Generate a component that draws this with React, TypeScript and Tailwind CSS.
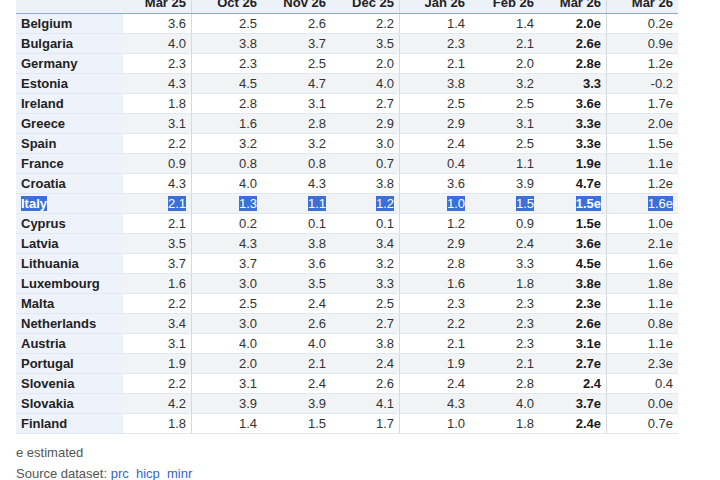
import React from "react";

const headers = ["Mar 25", "Oct 26", "Nov 26", "Dec 25", "Jan 26", "Feb 26", "Mar 26", "Mar 26"];

const rows: [string, string[]][] = [
  ["Belgium", ["3.6", "2.5", "2.6", "2.2", "1.4", "1.4", "2.0e", "0.2e"]],
  ["Bulgaria", ["4.0", "3.8", "3.7", "3.5", "2.3", "2.1", "2.6e", "0.9e"]],
  ["Germany", ["2.3", "2.3", "2.5", "2.0", "2.1", "2.0", "2.8e", "1.2e"]],
  ["Estonia", ["4.3", "4.5", "4.7", "4.0", "3.8", "3.2", "3.3", "-0.2"]],
  ["Ireland", ["1.8", "2.8", "3.1", "2.7", "2.5", "2.5", "3.6e", "1.7e"]],
  ["Greece", ["3.1", "1.6", "2.8", "2.9", "2.9", "3.1", "3.3e", "2.0e"]],
  ["Spain", ["2.2", "3.2", "3.2", "3.0", "2.4", "2.5", "3.3e", "1.5e"]],
  ["France", ["0.9", "0.8", "0.8", "0.7", "0.4", "1.1", "1.9e", "1.1e"]],
  ["Croatia", ["4.3", "4.0", "4.3", "3.8", "3.6", "3.9", "4.7e", "1.2e"]],
  ["Italy", ["2.1", "1.3", "1.1", "1.2", "1.0", "1.5", "1.5e", "1.6e"]],
  ["Cyprus", ["2.1", "0.2", "0.1", "0.1", "1.2", "0.9", "1.5e", "1.0e"]],
  ["Latvia", ["3.5", "4.3", "3.8", "3.4", "2.9", "2.4", "3.6e", "2.1e"]],
  ["Lithuania", ["3.7", "3.7", "3.6", "3.2", "2.8", "3.3", "4.5e", "1.6e"]],
  ["Luxembourg", ["1.6", "3.0", "3.5", "3.3", "1.6", "1.8", "3.8e", "1.8e"]],
  ["Malta", ["2.2", "2.5", "2.4", "2.5", "2.3", "2.3", "2.3e", "1.1e"]],
  ["Netherlands", ["3.4", "3.0", "2.6", "2.7", "2.2", "2.3", "2.6e", "0.8e"]],
  ["Austria", ["3.1", "4.0", "4.0", "3.8", "2.1", "2.3", "3.1e", "1.1e"]],
  ["Portugal", ["1.9", "2.0", "2.1", "2.4", "1.9", "2.1", "2.7e", "2.3e"]],
  ["Slovenia", ["2.2", "3.1", "2.4", "2.6", "2.4", "2.8", "2.4", "0.4"]],
  ["Slovakia", ["4.2", "3.9", "3.9", "4.1", "4.3", "4.0", "3.7e", "0.0e"]],
  ["Finland", ["1.8", "1.4", "1.5", "1.7", "1.0", "1.8", "2.4e", "0.7e"]],
];

const colW = ["w-[69px]", "w-[70px]", "w-[69px]", "w-[69px]", "w-[70px]", "w-[69px]", "w-[68px]", "w-[71px]"];
const sepAfter = [true, false, false, true, false, false, true, false];

export default function App() {
  return (
    <div
      className="w-[720px] h-[480px] overflow-hidden bg-white text-[13px] text-[#222]"
      style={{ fontFamily: '"Liberation Sans", Arial, sans-serif' }}
    >
      <div className="-mt-[7px] ml-[16px] w-[662px]">
        {/* header */}
        <div className="flex h-[20px] bg-[#edf1f8] border-b border-[#8fa8dc] box-content">
          <div className="w-[107px]" />
          {headers.map((h, i) => (
            <div
              key={i}
              className={`${colW[i]} flex items-center justify-end pr-[5px] font-bold leading-[20px] ${
                sepAfter[i] && i !== 7 ? "border-r border-[#d6dadf]" : ""
              }`}
            >
              {h}
            </div>
          ))}
        </div>
        {rows.map(([name, vals], r) => {
          const sel = name === "Italy";
          const even = r % 2 === 1;
          return (
            <div key={name} className="flex h-[20px] border-b border-[#e3e8f0]">
              <div className="w-[107px] bg-[#eef2fb] pl-[5px] font-bold leading-[19px]">
                {sel ? <span className="bg-[#3a70d8] text-white">{name}</span> : name}
              </div>
              {vals.map((v, i) => (
                <div
                  key={i}
                  className={`${colW[i]} text-right pr-[5px] leading-[19px] ${
                    even ? "bg-[#f2f3f4]" : "bg-white"
                  } ${i === 6 ? "font-bold text-[#1a1a1a]" : "text-[#333]"} ${
                    sepAfter[i] && i !== 7 ? "border-r border-[#d6dadf]" : ""
                  }`}
                >
                  {sel ? <span className="bg-[#3a70d8] text-white">{v}</span> : v}
                </div>
              ))}
            </div>
          );
        })}
        <div className="mt-[8px] text-[#555] leading-[21px]">e estimated</div>
        <div className="text-[#555] leading-[21px]">
          Source dataset: <span className="text-[#3366cc]">prc_hicp_minr</span>
        </div>
      </div>
    </div>
  );
}
